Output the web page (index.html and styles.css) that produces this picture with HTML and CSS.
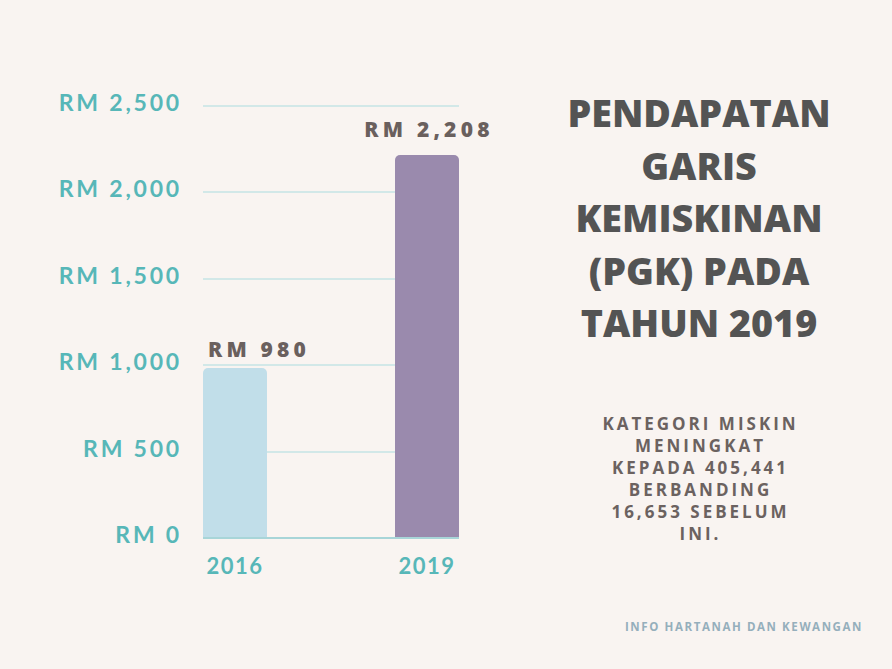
FILE: index.html
```html
<!DOCTYPE html>
<html lang="ms">
<head>
<meta charset="utf-8">
<title>Pendapatan Garis Kemiskinan</title>
<link rel="stylesheet" href="styles.css">
</head>
<body>
<div class="page">
  <div class="main">
    <div class="chart">
      <div class="axis">
        <span>RM 2,500</span>
        <span>RM 2,000</span>
        <span>RM 1,500</span>
        <span>RM 1,000</span>
        <span>RM 500</span>
        <span>RM 0</span>
      </div>
      <div class="plot">
        <div class="bar-col">
          <div class="value value-left">RM 980</div>
          <div class="bar bar-2016" style="height:169px"></div>
        </div>
        <div class="bar-col">
          <div class="value value-center">RM 2,208</div>
          <div class="bar bar-2019" style="height:382px"></div>
        </div>
      </div>
      <div class="years">
        <span>2016</span>
        <span>2019</span>
      </div>
    </div>
    <div class="panel">
      <h1 class="title">PENDAPATAN<br>GARIS<br>KEMISKINAN<br>(PGK) PADA<br>TAHUN 2019</h1>
      <p class="subtitle">KATEGORI MISKIN<br>MENINGKAT<br>KEPADA 405,441<br>BERBANDING<br>16,653 SEBELUM<br>INI.</p>
    </div>
  </div>
  <div class="footer">INFO HARTANAH DAN KEWANGAN</div>
</div>
</body>
</html>
```
FILE: styles.css
```css
html, body {
  margin: 0;
  padding: 0;
  background: #f9f4f1;
}

.page {
  width: 892px;
  height: 669px;
  display: flex;
  flex-direction: column;
  background: #f9f4f1;
  box-sizing: border-box;
  padding-bottom: 34px;
  overflow: hidden;
}

.main {
  display: flex;
  align-items: flex-start;
}

.chart {
  margin-top: 105px;
  display: grid;
  grid-template-columns: 180px 256px;
  column-gap: 23px;
  font-family: "Lato", "Liberation Sans", sans-serif;
}

.axis {
  grid-column: 1;
  grid-row: 1;
  margin-top: -15px;
  height: 456px;
  display: flex;
  flex-direction: column;
  justify-content: space-between;
  align-items: flex-end;
  color: #57b7b8;
  font-weight: 700;
  font-size: 23px;
  line-height: 24px;
  letter-spacing: 2.8px;
}

.axis span {
  display: block;
  margin-right: -2px;
}

.plot {
  grid-column: 2;
  grid-row: 1;
  height: 432px;
  border-bottom: 2px solid #a8d5d8;
  background-image: repeating-linear-gradient(to bottom, #d2e8e8 0, #d2e8e8 2px, transparent 2px, transparent 86.4px);
  display: flex;
  justify-content: space-between;
  align-items: flex-end;
}

.bar-col {
  width: 64px;
  display: flex;
  flex-direction: column;
  align-items: center;
}

.value {
  white-space: nowrap;
  color: #6a605e;
  font-family: "Open Sans", "Liberation Sans", sans-serif;
  font-weight: 800;
  font-size: 21px;
  line-height: 24px;
  letter-spacing: 4.2px;
}

.value-left {
  align-self: flex-start;
  margin-left: 5px;
  margin-bottom: 7px;
}

.value-center {
  margin-bottom: 14px;
  margin-right: -4px;
}

.value-comma {
  letter-spacing: 8px;
}

.bar {
  width: 64px;
  border-radius: 5px 5px 0 0;
}

.bar-2016 {
  background: #c1dee9;
}

.bar-2019 {
  background: #9a8aad;
}

.years {
  grid-column: 2;
  grid-row: 2;
  display: flex;
  justify-content: space-between;
  margin-top: 8px;
  color: #57b7b8;
  font-weight: 700;
  font-size: 22px;
  line-height: 24px;
  letter-spacing: 1.5px;
}

.years span {
  width: 64px;
  text-align: center;
}

.panel {
  margin-left: 90px;
  margin-top: 87px;
  width: 300px;
  display: flex;
  flex-direction: column;
  align-items: center;
  text-align: center;
  font-family: "Open Sans", "Liberation Sans", sans-serif;
}

.title {
  margin: 0;
  color: #545454;
  font-weight: 800;
  font-size: 37.7px;
  line-height: 52.5px;
  letter-spacing: 0;
}

.subtitle {
  margin: 63px 0 0 0;
  color: #6b6260;
  font-weight: 700;
  font-size: 17px;
  line-height: 22px;
  letter-spacing: 3px;
  padding-left: 3px;
}

.footer {
  margin-top: auto;
  text-align: right;
  padding-right: 29px;
  color: #95afbc;
  font-family: "Open Sans", "Liberation Sans", sans-serif;
  font-weight: 700;
  font-size: 11.5px;
  line-height: 16px;
  letter-spacing: 1.6px;
}
```
